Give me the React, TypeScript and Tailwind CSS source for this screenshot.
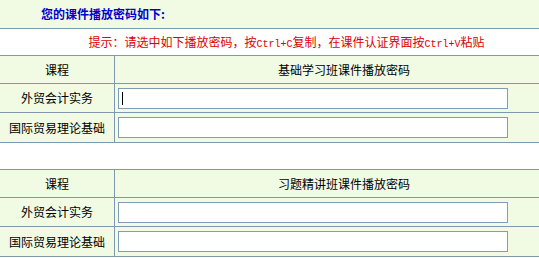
const cjk = '[font-family:"Noto_Sans_CJK_SC","Noto_Sans",sans-serif]';

function PwdRow({ name, h, caret }: { name: string; h: string; caret?: boolean }) {
  return (
    <div className={`flex ${h} border-b border-[#7f98b2] bg-[#f1fae3]`}>
      <div className="w-[115px] shrink-0 border-r border-[#7f98b2] flex items-center justify-center text-[12px] text-black">
        {name}
      </div>
      <div className="flex-1 flex items-center pl-[3px]">
        <div className="relative">
          <input
            type="text"
            className="block w-[390px] h-[21px] border border-[#7f9db9] bg-white outline-none"
          />
          {caret && <span className="absolute left-[4px] top-[4px] w-px h-[13px] bg-black" />}
        </div>
      </div>
    </div>
  );
}

function CourseTable({ title, first }: { title: string; first?: boolean }) {
  return (
    <>
      <div className="flex h-[28px] border-b border-[#7f98b2] bg-[#f1fae3] text-[12px] text-black">
        <div className="w-[115px] shrink-0 border-r border-[#7f98b2] flex items-center justify-center">课程</div>
        <div className="flex-1 flex items-center justify-center">{title}</div>
      </div>
      <PwdRow name="外贸会计实务" h="h-[29px]" caret={first} />
      <PwdRow name="国际贸易理论基础" h="h-[30px]" />
    </>
  );
}

export default function App() {
  return (
    <div className={`w-[539px] h-[258px] overflow-hidden bg-white ${cjk}`}>
      <div className="w-[573px]">
        <div className="h-[29px] border-b border-[#7f98b2] bg-[#f1fae3] flex items-center pl-[41px]">
          <span className="text-[12px] font-bold text-[#0000cc]">您的课件播放密码如下:</span>
        </div>
        <div className="h-[27px] border-b border-[#7f98b2] bg-white flex items-center justify-center text-[12px] text-[#dd0000]">
          <span>
            提示：请选中如下播放密码，按
            <span className='[font-family:"Liberation_Mono",monospace] text-[10px]'>Ctrl+C</span>
            复制，在课件认证界面按
            <span className='[font-family:"Liberation_Mono",monospace] text-[10px]'>Ctrl+V</span>
            粘贴
          </span>
        </div>
        <CourseTable title="基础学习班课件播放密码" first />
        <div className="h-[27px] border-b border-[#7f98b2] bg-white" />
        <CourseTable title="习题精讲班课件播放密码" />
      </div>
    </div>
  );
}
